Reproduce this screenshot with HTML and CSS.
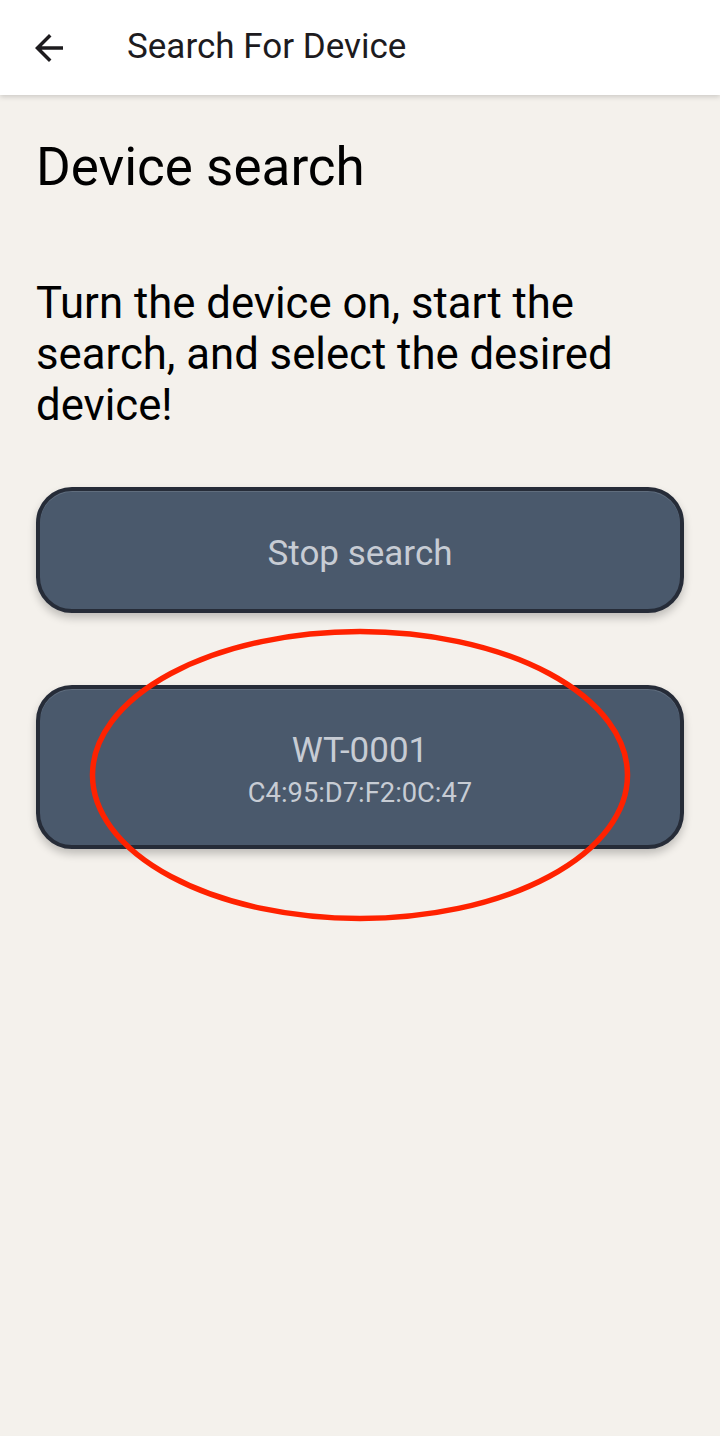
FILE: index.html
```html
<!DOCTYPE html>
<html lang="en">
<head>
<meta charset="utf-8">
<title>Search For Device</title>
<link rel="stylesheet" href="styles.css">
</head>
<body>
<header class="appbar">
  <button class="back" aria-label="Back">
    <svg viewBox="0 0 24 24" width="42" height="42"><path d="M20 11H7.83l5.59-5.59L12 4l-8 8 8 8 1.41-1.41L7.83 13H20v-2z"/></svg>
  </button>
  <div class="appbar-title">Search For Device</div>
</header>
<main class="content">
  <h1 class="heading">Device search</h1>
  <p class="intro">Turn the device on, start the search, and select the desired device!</p>
  <button class="action">Stop search</button>
  <button class="action device">
    <span class="device-name">WT-0001</span>
    <span class="device-mac">C4:95:D7:F2:0C:47</span>
  </button>
</main>
<svg class="marker" viewBox="0 0 550 300" width="550" height="300" aria-hidden="true">
  <ellipse cx="275" cy="150" rx="267.5" ry="143.5" fill="none" stroke="#ff2200" stroke-width="5.5"/>
</svg>
</body>
</html>
```
FILE: styles.css
```css
html, body {
  margin: 0;
  padding: 0;
}
body {
  position: relative;
  min-height: 1436px;
  background: #f4f1ec;
  font-family: Roboto, "Noto Sans", "Liberation Sans", sans-serif;
  color: #000;
}
.appbar {
  height: 95px;
  background: #ffffff;
  display: flex;
  align-items: center;
  box-shadow: 0 2px 5px rgba(0, 0, 0, 0.16);
  position: relative;
  z-index: 1;
}
.back {
  margin-left: 28px;
  width: 42px;
  height: 42px;
  padding: 0;
  border: 0;
  background: none;
  display: flex;
}
.back svg {
  fill: #1d1b1e;
}
.appbar-title {
  margin-left: 57px;
  margin-bottom: 2px;
  font-size: 35px;
  font-weight: 400;
  color: #1d1b1e;
  line-height: 40px;
}
.content {
  padding: 0 36px;
  display: flex;
  flex-direction: column;
}
.heading {
  margin: 41px 0 0;
  font-size: 53px;
  font-weight: 400;
  line-height: 62px;
  color: #000;
}
.intro {
  margin: 80px 0 0;
  font-size: 43.7px;
  line-height: 51px;
  color: #000;
}
.action {
  margin-top: 56px;
  height: 126px;
  width: 648px;
  box-sizing: border-box;
  border: 4px solid #262c38;
  border-radius: 36px;
  background: #4a596c;
  box-shadow: 0 5px 8px rgba(0, 0, 0, 0.22), inset 0 1px 0 rgba(255, 255, 255, 0.12);
  color: #c7ccd4;
  font-family: Roboto, "Noto Sans", "Liberation Sans", sans-serif;
  font-size: 35px;
  font-weight: 400;
  display: flex;
  flex-direction: column;
  align-items: center;
  justify-content: center;
  padding: 6px 0 0;
}
.device {
  margin-top: 72px;
  height: 164px;
}
.device-name {
  font-size: 35px;
  line-height: 40px;
}
.device-mac {
  margin-top: 6px;
  font-size: 27.3px;
  line-height: 32px;
}
.marker {
  position: absolute;
  left: 85px;
  top: 625px;
  pointer-events: none;
}
```
